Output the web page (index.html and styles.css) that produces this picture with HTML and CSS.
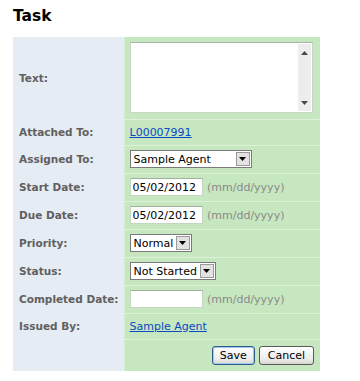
FILE: index.html
```html
<html>
<head>
<meta charset="UTF-8">
<link rel="stylesheet" href="styles.css">
</head>
<body>

<h1>Task</h1>

<table class="task">
<colgroup><col class="labelCol"><col class="valueCol"></colgroup>
<tr class="textRow">
   <th>Text:</th>
   <td>
      <div class="note">
         <textarea></textarea>
         <div class="scroll">
            <svg width="7" height="4" viewBox="0 0 7 4"><path d="M3.5 0L7 4H0z" fill="#4a4a4a"/></svg>
            <svg width="7" height="4" viewBox="0 0 7 4"><path d="M0 0h7L3.5 4z" fill="#4a4a4a"/></svg>
         </div>
      </div>
   </td>
</tr>
<tr class="linkRow">
   <th>Attached To:</th>
   <td><a href="#">L00007991</a></td>
</tr>
<tr>
   <th>Assigned To:</th>
   <td><span class="pick" style="width: 122px;"><select><option>Sample Agent</option></select><span class="arrow"><svg width="7" height="4" viewBox="0 0 7 4"><path d="M0 0h7L3.5 4z" fill="#000"/></svg></span></span></td>
</tr>
<tr>
   <th>Start Date:</th>
   <td><input class="date" type="text" value="05/02/2012"> <span class="hint">(mm/dd/yyyy)</span></td>
</tr>
<tr>
   <th>Due Date:</th>
   <td><input class="date" type="text" value="05/02/2012"> <span class="hint">(mm/dd/yyyy)</span></td>
</tr>
<tr>
   <th>Priority:</th>
   <td><span class="pick" style="width: 62px;"><select><option>Normal</option></select><span class="arrow"><svg width="7" height="4" viewBox="0 0 7 4"><path d="M0 0h7L3.5 4z" fill="#000"/></svg></span></span></td>
</tr>
<tr>
   <th>Status:</th>
   <td><span class="pick" style="width: 86px;"><select><option>Not Started</option></select><span class="arrow"><svg width="7" height="4" viewBox="0 0 7 4"><path d="M0 0h7L3.5 4z" fill="#000"/></svg></span></span></td>
</tr>
<tr>
   <th>Completed Date:</th>
   <td><input class="date" type="text" value=""> <span class="hint">(mm/dd/yyyy)</span></td>
</tr>
<tr class="linkRow">
   <th>Issued By:</th>
   <td><a href="#">Sample Agent</a></td>
</tr>
<tr class="buttons">
   <th></th>
   <td><button class="save">Save</button><button class="cancel">Cancel</button></td>
</tr>
</table>

</body>
</html>
```

FILE: styles.css
```css
body {
   margin: 0;
   padding: 7px 13px;
   background: #ffffff;
   font-family: 'DejaVu Sans', Verdana, sans-serif;
   font-size: 11px;
}
h1 {
   font-size: 15.5px;
   font-weight: bold;
   color: #000000;
   margin: 0 0 12px 0;
   line-height: 18px;
}
.task {
   border-collapse: collapse;
   table-layout: fixed;
   width: 307px;
   font-family: 'DejaVu Sans', Verdana, sans-serif;
   font-size: 11px;
}
.labelCol {
   width: 111px;
}
.valueCol {
   width: 196px;
}
.task th {
   background: #e6ecf3;
   color: #606060;
   text-align: left;
   font-size: 10.5px;
   font-weight: bold;
   padding: 4px 0 4px 6px;
   line-height: 17px;
   height: 28px;
   box-sizing: border-box;
   vertical-align: middle;
   white-space: nowrap;
}
.task td {
   background: #c6e7c0;
   border-left: 1px solid #d4ecd0;
   border-bottom: 1px solid #def2da;
   padding: 4px 6px 4px 5px;
   font-size: 11px;
   line-height: 17px;
   height: 28px;
   box-sizing: border-box;
   vertical-align: middle;
   white-space: nowrap;
}
.task .linkRow td,
.task .linkRow th {
   height: 26px;
}
.task .textRow td,
.task .textRow th {
   padding: 5px 6px 5px 5px;
   height: 82px;
}
.task .textRow th {
   padding-left: 6px;
}
.task .buttons td,
.task .buttons th {
   border-bottom: 0;
   height: 31px;
}
.task .buttons td {
   text-align: right;
   padding: 6px 6px 6px 5px;
}
.note {
   display: flex;
   width: 183px;
   height: 71px;
   box-sizing: border-box;
   border: 1px solid #c8d6c4;
   border-top-color: #a9b5a6;
   background: #ffffff;
}
.note textarea {
   flex: 1;
   border: 0;
   resize: none;
   outline: none;
   margin: 0;
   background: #ffffff;
}
.scroll {
   width: 13px;
   margin: 1px 1px 1px 0;
   background: #ededed;
   display: flex;
   flex-direction: column;
   justify-content: space-between;
   align-items: center;
   padding: 7px 0 6px 0;
}
a {
   color: #0c48c4;
   text-decoration: underline;
}
.pick {
   display: inline-block;
   position: relative;
   height: 18px;
   vertical-align: middle;
}
.pick select {
   appearance: none;
   -webkit-appearance: none;
   width: 100%;
   height: 18px;
   box-sizing: border-box;
   border: 1px solid #7a7a7a;
   border-radius: 0;
   background: #ffffff;
   font-family: 'DejaVu Sans', Verdana, sans-serif;
   font-size: 11px;
   color: #000000;
   padding: 0 0 0 3px;
   margin: 0;
}
.arrow {
   position: absolute;
   right: 2px;
   top: 2px;
   width: 14px;
   height: 14px;
   box-sizing: border-box;
   background: #e2e2e2;
   border: 1px solid #9a9a9a;
   display: flex;
   align-items: center;
   justify-content: center;
}
.date {
   width: 73px;
   height: 18px;
   box-sizing: border-box;
   border: 1px solid #c3d6bf;
   border-top-color: #9fb09b;
   background: #ffffff;
   font-family: 'DejaVu Sans', Verdana, sans-serif;
   font-size: 11px;
   padding: 0 2px;
   margin: 0;
   vertical-align: middle;
}
.hint {
   color: #8a8a8a;
   margin-left: 1px;
   vertical-align: middle;
}
button {
   font-family: 'DejaVu Sans', Verdana, sans-serif;
   font-size: 11px;
   height: 19px;
   padding: 0 8px;
   margin: 0 0 0 4px;
   border: 1px solid #5a5a5a;
   border-radius: 3px;
   background: linear-gradient(#ffffff, #ececec 70%, #d8d8d0);
   color: #000000;
   vertical-align: middle;
}
button.save {
   border-color: #2f5d8a;
   box-shadow: inset 0 0 0 1px #9cc8f0;
   padding: 0 7px;
}
```
